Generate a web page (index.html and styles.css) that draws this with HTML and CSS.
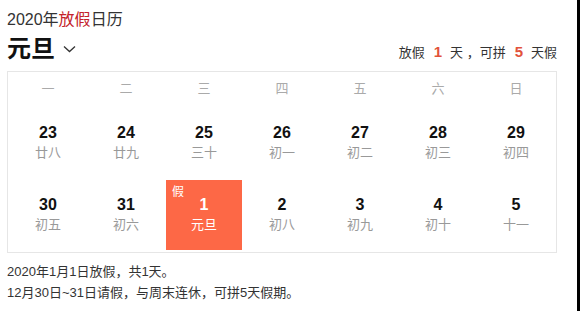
FILE: index.html
```html
<!DOCTYPE html>
<html lang="zh-CN">
<head>
<meta charset="utf-8">
<link rel="stylesheet" href="styles.css">
</head>
<body>
<div class="page">
  <div class="title">2020年<span class="red">放假</span>日历</div>
  <div class="head">
    <div class="holiday-name">元旦
      <svg class="chev" width="13" height="8" viewBox="0 0 13 8"><path d="M1 1.5 L6.5 6.5 L12 1.5" fill="none" stroke="#333" stroke-width="1.3"/></svg>
    </div>
    <div class="summary">放假<b>1</b>天 ，可拼<b>5</b>天假</div>
  </div>
  <div class="cal">
    <div class="wk">一</div><div class="wk">二</div><div class="wk">三</div><div class="wk">四</div><div class="wk">五</div><div class="wk">六</div><div class="wk">日</div>
    <div class="day"><div class="num">23</div><div class="lunar">廿八</div></div>
    <div class="day"><div class="num">24</div><div class="lunar">廿九</div></div>
    <div class="day"><div class="num">25</div><div class="lunar">三十</div></div>
    <div class="day"><div class="num">26</div><div class="lunar">初一</div></div>
    <div class="day"><div class="num">27</div><div class="lunar">初二</div></div>
    <div class="day"><div class="num">28</div><div class="lunar">初三</div></div>
    <div class="day"><div class="num">29</div><div class="lunar">初四</div></div>
    <div class="day"><div class="num">30</div><div class="lunar">初五</div></div>
    <div class="day"><div class="num">31</div><div class="lunar">初六</div></div>
    <div class="day off"><span class="tag">假</span><div class="num">1</div><div class="lunar">元旦</div></div>
    <div class="day"><div class="num">2</div><div class="lunar">初八</div></div>
    <div class="day"><div class="num">3</div><div class="lunar">初九</div></div>
    <div class="day"><div class="num">4</div><div class="lunar">初十</div></div>
    <div class="day"><div class="num">5</div><div class="lunar">十一</div></div>
  </div>
  <div class="notes">
    <p>2020年1月1日放假，共1天。</p>
    <p>12月30日~31日请假，与周末连休，可拼5天假期。</p>
  </div>
</div>
</body>
</html>
```
FILE: styles.css
```css
html, body {
  margin: 0;
  padding: 0;
  background: #000;
}
body {
  font-family: "Liberation Sans", "Noto Sans CJK SC", sans-serif;
  color: #333;
}
.page {
  width: 577px;
  height: 311px;
  background: #fff;
  box-sizing: border-box;
  padding: 10px 20px 0 7px;
  overflow: hidden;
}
.title {
  font-size: 16px;
  line-height: 20px;
  color: #333;
}
.red {
  color: #c4232b;
}
.head {
  display: flex;
  justify-content: space-between;
  align-items: center;
  height: 38px;
  margin-bottom: 3px;
}
.holiday-name {
  font-size: 24px;
  font-weight: bold;
  color: #111;
  display: flex;
  align-items: center;
  line-height: 30px;
}
.chev {
  margin-left: 8px;
  margin-top: -1px;
}
.summary {
  font-size: 13px;
  color: #333;
  margin-top: 6px;
  line-height: 18px;
}
.summary b {
  color: #e2523b;
  font-size: 15px;
  margin: 0 8px 0 9px;
}
.cal {
  border: 1px solid #e6e6e6;
  display: grid;
  grid-template-columns: repeat(7, 1fr);
  grid-template-rows: 34px 70px 70px;
  column-gap: 2px;
  row-gap: 2px;
  padding: 0 2px 2px;
}
.wk {
  font-size: 13px;
  color: #aaa;
  text-align: center;
  line-height: 34px;
}
.day {
  position: relative;
  text-align: center;
  padding-top: 15px;
  box-sizing: border-box;
}
.num {
  font-size: 16px;
  font-weight: bold;
  color: #111;
  line-height: 20px;
}
.lunar {
  font-size: 13px;
  color: #999;
  line-height: 20px;
}
.off {
  background: #fd6846;
}
.off .num,
.off .lunar {
  color: #fff;
}
.tag {
  position: absolute;
  top: 6px;
  left: 6px;
  font-size: 12px;
  line-height: 12px;
  color: #fff;
}
.notes {
  margin-top: 8px;
  font-size: 13px;
  color: #333;
}
.notes p {
  margin: 0;
  line-height: 21px;
}
```
